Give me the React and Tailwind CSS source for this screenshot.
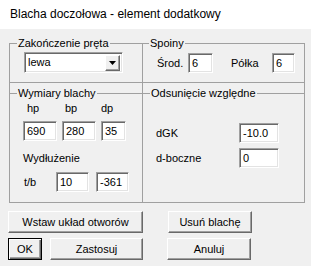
const font = { fontFamily: '"Liberation Sans", Arial, sans-serif' };

function Field({ value, className = "" }) {
  return (
    <div
      className={
        "h-[20px] bg-white border border-t-[#a0a0a0] border-l-[#a0a0a0] border-r-white border-b-white shadow-[inset_1px_1px_0_#696969,inset_-1px_-1px_0_#e3e3e3] pl-[3px] text-[11px] leading-[18px] text-black " +
        className
      }
    >
      {value}
    </div>
  );
}

function Legend({ children, className = "" }) {
  return (
    <div className={"-mt-[7px] w-fit bg-[#f0f0f0] px-[1px] text-[11px] leading-[13px] text-black " + className}>
      {children}
    </div>
  );
}

function Btn({ children, className = "", def = false }) {
  return (
    <div
      className={
        "flex items-center justify-center bg-[#f0f0f0] text-[11px] text-black " +
        (def
          ? "border border-black shadow-[inset_1px_1px_0_#fff,inset_-1px_-1px_0_#696969,inset_-2px_-2px_0_#a0a0a0] "
          : "border border-t-white border-l-white border-r-[#696969] border-b-[#696969] shadow-[inset_-1px_-1px_0_#a0a0a0] ") +
        className
      }
    >
      {children}
    </div>
  );
}

export default function App() {
  return (
    <div className="w-[311px] h-[266px] bg-[#f0f0f0] overflow-hidden" style={font}>
      <div className="h-[29px] bg-white pl-[10px] pt-[7px] text-[12px] leading-[15px] text-black">
        Blacha doczołowa - element dodatkowy
      </div>

      <div className="ml-[9px] mt-[14px] flex w-[296px] h-[160px] border-l border-r border-b border-[#a0a0a0]">
        {/* left column */}
        <div className="w-[133px] border-r border-[#a0a0a0]">
          <div className="h-[40px] border-t border-b border-[#a0a0a0]">
            <Legend className="ml-[7px]">Zakończenie pręta</Legend>
            <div className="ml-[14px] mt-[2px] flex h-[21px] w-[99px] items-center justify-between bg-white border border-t-[#a0a0a0] border-l-[#a0a0a0] border-r-white border-b-white shadow-[inset_1px_1px_0_#696969,inset_-1px_-1px_0_#e3e3e3] pl-[3px] pr-[2px]">
              <span className="text-[11px] leading-[13px] text-black">lewa</span>
              <div className="flex h-[16px] w-[15px] items-center justify-center bg-[#f0f0f0] border border-t-white border-l-white border-r-[#696969] border-b-[#696969] shadow-[inset_-1px_-1px_0_#a0a0a0]">
                <svg width="7" height="4" viewBox="0 0 7 4">
                  <path d="M0 0H7L3.5 4Z" fill="#000" />
                </svg>
              </div>
            </div>
          </div>

          <div className="mt-[10px] border-t border-[#a0a0a0]">
            <Legend className="ml-[7px]">Wymiary blachy</Legend>
            <div className="mt-[2px] flex text-[11px] leading-[13px] text-black">
              <span className="ml-[17px] w-[38px]">hp</span>
              <span className="w-[36px]">bp</span>
              <span>dp</span>
            </div>
            <div className="ml-[13px] mt-[6px] flex gap-[5px]">
              <Field value="690" className="w-[34px]" />
              <Field value="280" className="w-[34px]" />
              <Field value="35" className="w-[25px]" />
            </div>
            <div className="ml-[13px] mt-[11px] text-[11px] leading-[13px] text-black">Wydłużenie</div>
            <div className="ml-[14px] mt-[7px] flex items-center">
              <span className="w-[32px] text-[11px] leading-[13px] text-black">t/b</span>
              <Field value="10" className="w-[33px]" />
              <Field value="-361" className="ml-[7px] w-[33px]" />
            </div>
          </div>
        </div>

        {/* right column */}
        <div className="flex-1">
          <div className="h-[40px] border-t border-b border-[#a0a0a0]">
            <Legend className="ml-[6px]">Spoiny</Legend>
            <div className="mt-[3px] flex items-center text-[11px] leading-[13px] text-black">
              <span className="ml-[14px] w-[31px]">Środ.</span>
              <Field value="6" className="w-[25px]" />
              <span className="ml-[18px] w-[41px]">Półka</span>
              <Field value="6" className="w-[23px]" />
            </div>
          </div>

          <div className="mt-[10px] border-t border-[#a0a0a0]">
            <Legend className="ml-[7px]">Odsunięcie względne</Legend>
            <div className="mt-[23px] flex items-center text-[11px] leading-[13px] text-black">
              <span className="ml-[13px] w-[83px]">dGK</span>
              <Field value="-10.0" className="w-[40px]" />
            </div>
            <div className="mt-[5px] flex items-center text-[11px] leading-[13px] text-black">
              <span className="ml-[13px] w-[83px]">d-boczne</span>
              <Field value="0" className="w-[40px]" />
            </div>
          </div>
        </div>
      </div>

      <div className="ml-[8px] mt-[8px] flex gap-[25px]">
        <Btn className="h-[22px] w-[135px]">Wstaw układ otworów</Btn>
        <Btn className="h-[22px] w-[84px]">Usuń blachę</Btn>
      </div>
      <div className="ml-[8px] mt-[5px] flex">
        <Btn def className="h-[22px] w-[34px]">OK</Btn>
        <Btn className="ml-[8px] h-[22px] w-[93px]">Zastosuj</Btn>
        <Btn className="ml-[24px] h-[22px] w-[84px]">Anuluj</Btn>
      </div>
    </div>
  );
}
